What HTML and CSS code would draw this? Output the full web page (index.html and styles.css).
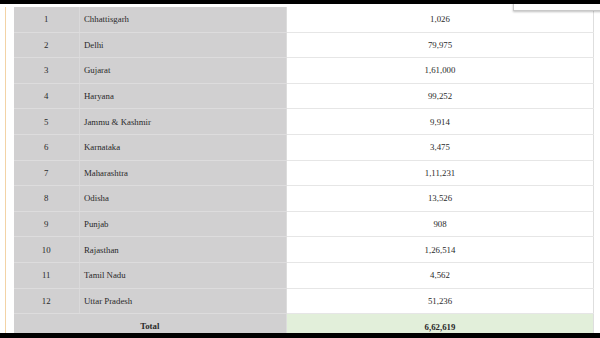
FILE: index.html
```html
<!DOCTYPE html>
<html>
<head>
<meta charset="utf-8">
<link rel="stylesheet" href="styles.css">
</head>
<body>
<div class="bar bar-top"></div>
<div class="stage">
  <div class="menu"></div>
  <div class="frame">
    <table class="data">
      <colgroup><col class="c1"><col class="c2"><col class="c3"></colgroup>
      <tbody>
        <tr><td class="sn">1</td><td class="st">Chhattisgarh</td><td class="val">1,026</td></tr>
        <tr><td class="sn">2</td><td class="st">Delhi</td><td class="val">79,975</td></tr>
        <tr><td class="sn">3</td><td class="st">Gujarat</td><td class="val">1,61,000</td></tr>
        <tr><td class="sn">4</td><td class="st">Haryana</td><td class="val">99,252</td></tr>
        <tr><td class="sn">5</td><td class="st">Jammu &amp; Kashmir</td><td class="val">9,914</td></tr>
        <tr><td class="sn">6</td><td class="st">Karnataka</td><td class="val">3,475</td></tr>
        <tr><td class="sn">7</td><td class="st">Maharashtra</td><td class="val">1,11,231</td></tr>
        <tr><td class="sn">8</td><td class="st">Odisha</td><td class="val">13,526</td></tr>
        <tr><td class="sn">9</td><td class="st">Punjab</td><td class="val">908</td></tr>
        <tr><td class="sn">10</td><td class="st">Rajasthan</td><td class="val">1,26,514</td></tr>
        <tr><td class="sn">11</td><td class="st">Tamil Nadu</td><td class="val">4,562</td></tr>
        <tr><td class="sn">12</td><td class="st">Uttar Pradesh</td><td class="val">51,236</td></tr>
        <tr class="total"><td class="tl" colspan="2">Total</td><td class="tv">6,62,619</td></tr>
      </tbody>
    </table>
  </div>
</div>
<div class="bar bar-bottom"></div>
</body>
</html>
```
FILE: styles.css
```css
html, body {
  margin: 0;
  padding: 0;
}
body {
  width: 600px;
  height: 338px;
  overflow: hidden;
  display: flex;
  flex-direction: column;
  background: #fff;
  font-family: "Liberation Serif", "Times New Roman", serif;
  color: #2a2a2a;
}
.bar {
  background: #000;
  flex: none;
}
.bar-top { height: 4px; }
.bar-bottom { height: 5px; }
.stage {
  flex: 1;
  position: relative;
  overflow: hidden;
  padding: 2.5px 0 0 5px;
}
.menu {
  position: absolute;
  top: -2px;
  left: 513px;
  width: 100px;
  height: 7px;
  background: #fff;
  border: 1px solid #c9c9c9;
  box-shadow: 0 1px 2px rgba(0,0,0,0.25);
  z-index: 2;
}
.frame {
  border-left: 1.5px solid #f3d3a6;
  padding-left: 7.5px;
  height: 100%;
}
.data {
  border-collapse: collapse;
  table-layout: fixed;
  width: 580px;
  font-size: 8.8px;
}
.c1 { width: 66px; }
.c2 { width: 207px; }
.c3 { width: 307px; }
.data tr { height: 25.6px; }
.data td {
  padding: 0 4px;
  vertical-align: middle;
  line-height: 12px;
}
.sn, .st, .tl {
  background: #d1d0d1;
  border-bottom: 1px solid #dddcdd;
}
.sn {
  text-align: center;
  border-right: 1px solid #dad9da;
}
.st {
  text-align: left;
  border-right: 1px solid #dcdcdc;
}
.val {
  text-align: center;
  background: #fff;
  border-bottom: 1px solid #e6e6e6;
  border-right: 1px solid #dedede;
}
.total td {
  font-weight: bold;
  text-align: center;
}
.tl { border-right: 1px solid #dcdcdc; }
.tv {
  background: #e2efda;
  border-right: 1px solid #dedede;
}
```
